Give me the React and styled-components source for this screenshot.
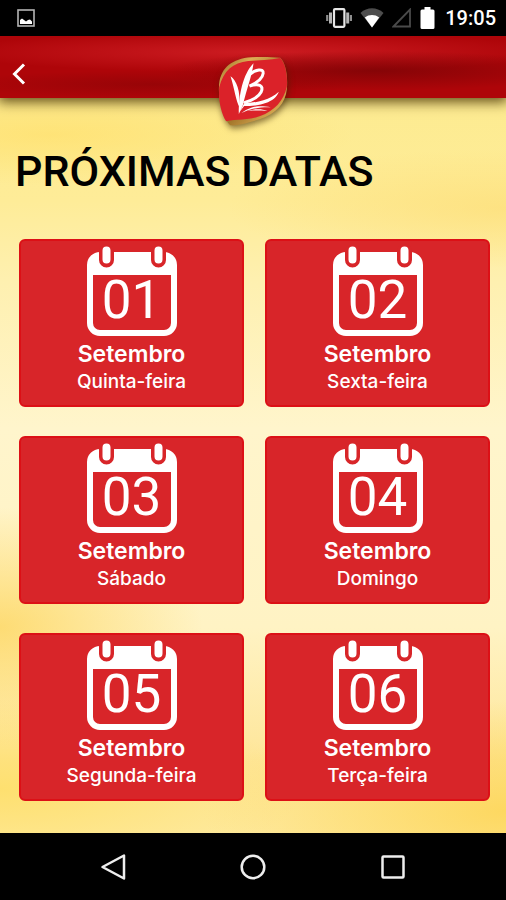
import React from 'react';
import styled, { createGlobalStyle } from 'styled-components';

const dates = [
  { day: '01', month: 'Setembro', weekday: 'Quinta-feira' },
  { day: '02', month: 'Setembro', weekday: 'Sexta-feira' },
  { day: '03', month: 'Setembro', weekday: 'Sábado' },
  { day: '04', month: 'Setembro', weekday: 'Domingo' },
  { day: '05', month: 'Setembro', weekday: 'Segunda-feira' },
  { day: '06', month: 'Setembro', weekday: 'Terça-feira' },
];

const StatusBar = () => (
  <Status>
    <svg width="18" height="18" viewBox="0 0 18 18">
      <rect x="1" y="1" width="16" height="16" fill="none" stroke="#b4b4b4" strokeWidth="1.6" />
      <path d="M3 15v-4l2-1.5 2 1.5 2 1.5 2-1.5 2-.5 2 2v2.5z" fill="#fff" />
    </svg>
    <StatusIcons>
      <svg width="26" height="20" viewBox="0 0 26 20">
        <rect x="8" y="1.2" width="10.4" height="17.6" rx="1" fill="none" stroke="#e6e6e6" strokeWidth="2.2" />
        <path d="M4.5 4.5v11M21.7 4.5v11" stroke="#b5b5b5" strokeWidth="3" />
        <path d="M1.2 7v6M24.9 7v6" stroke="#8d8d8d" strokeWidth="2.2" />
      </svg>
      <svg width="24" height="20" viewBox="0 0 24 20">
        <path d="M0.5 5C7-1.2 17-1.2 23.5 5L12 19.5z" fill="#4d4d4d" />
        <path d="M4.8 9.5C9 6.2 15 6.2 19.2 9.5L12 19.5z" fill="#fff" />
      </svg>
      <svg width="20" height="20" viewBox="0 0 20 20">
        <path d="M1.5 18.5L18 1.5V18.5z" fill="none" stroke="#4a4a4a" strokeWidth="1.8" />
      </svg>
      <svg width="15" height="22" viewBox="0 0 15 22">
        <path d="M4.5 0h6v2.5H13a1.5 1.5 0 0 1 1.5 1.5v16.5a1.5 1.5 0 0 1-1.5 1.5H2a1.5 1.5 0 0 1-1.5-1.5V4A1.5 1.5 0 0 1 2 2.5h2.5z" fill="#fff" />
      </svg>
      <Clock>19:05</Clock>
    </StatusIcons>
  </Status>
);

const Logo = () => (
  <LogoMark viewBox="46 45 225 225" role="img" aria-label="VB">
    <defs>
      <linearGradient id="gold" x1="0" y1="0" x2="1" y2="1">
        <stop offset="0" stopColor="#8d6420" />
        <stop offset="0.25" stopColor="#dfae55" />
        <stop offset="0.55" stopColor="#a3762a" />
        <stop offset="0.8" stopColor="#d3a44e" />
        <stop offset="1" stopColor="#7b551a" />
      </linearGradient>
    </defs>
    <path d="M57 132C62 82 98 56 152 52C184 50 214 51 240 53C256 66 264 106 260 148C256 190 228 222 178 238C144 248 118 258 90 256C70 236 52 178 57 132Z" fill="url(#gold)" />
    <path d="M57 142C70 92 98 68 144 63C176 60 210 61 240 54C255 67 263 106 260 140C250 184 222 212 180 228C142 242 108 236 78 244C62 220 54 176 57 142Z" fill="#db2229" />
    <g fill="#fff">
      <path d="M91 109C109 122 121 150 118 202C108 186 102 142 91 109Z" />
      <path d="M160 70C156 106 140 146 128 196L116 222C115 168 128 102 160 70Z" />
      <path d="M132 190C172 188 211 178 236 155C224 188 178 198 132 198L118 216Z" />
      <path d="M124 219C154 197 177 196 212 202C176 201 153 206 124 219Z" />
      <path d="M142 213C164 206 184 206 202 213C182 212 166 211 142 213Z" />
    </g>
    <path d="M148 104C166 88 191 84 189 100C187 119 164 131 148 138C178 128 191 138 183 156C173 174 150 183 134 187" fill="none" stroke="#fff" strokeWidth="9" strokeLinecap="round" />
  </LogoMark>
);

const CalendarIcon = () => (
  <svg width="92" height="91" viewBox="0 0 92 91">
    <path
      fillRule="evenodd"
      fill="#fff"
      d="M14 6H78A13 13 0 0 1 91 19V77A13 13 0 0 1 78 90H14A13 13 0 0 1 1 77V19A13 13 0 0 1 14 6ZM7 29V77A7 7 0 0 0 14 84H78A7 7 0 0 0 85 77V29Z"
    />
    <path d="M20.5 5V14M72.5 5V14" stroke="#d82529" strokeWidth="15" strokeLinecap="round" />
    <path d="M20.5 4.5V13.5M72.5 4.5V13.5" stroke="#fff" strokeWidth="8" strokeLinecap="round" />
  </svg>
);

const DateCard = ({ date }) => (
  <Card type="button">
    <Calendar>
      <CalendarIcon />
      <Day>{date.day}</Day>
    </Calendar>
    <Month>{date.month}</Month>
    <Weekday>{date.weekday}</Weekday>
  </Card>
);

const App = () => {
  return (
    <>
      <GlobalStyle />
      <Screen>
        <StatusBar />
        <Header>
          <BackButton type="button" aria-label="Voltar">
            <svg width="14" height="22" viewBox="0 0 14 22">
              <path d="M12 1.5L2.5 11L12 20.5" fill="none" stroke="#fff" strokeWidth="3" />
            </svg>
          </BackButton>
          <Logo />
        </Header>
        <Main>
          <Title>PRÓXIMAS DATAS</Title>
          <Grid>
            {dates.map((date) => (
              <DateCard key={date.day} date={date} />
            ))}
          </Grid>
        </Main>
        <NavBar>
          <NavButton type="button" aria-label="Back">
            <svg width="28" height="28" viewBox="0 0 28 28">
              <path d="M25 2.5V25.5L3.5 14Z" />
            </svg>
          </NavButton>
          <NavButton type="button" aria-label="Home">
            <svg width="28" height="28" viewBox="0 0 28 28">
              <circle cx="14" cy="14" r="11.3" />
            </svg>
          </NavButton>
          <NavButton type="button" aria-label="Recent">
            <svg width="28" height="28" viewBox="0 0 28 28">
              <rect x="3.5" y="3.5" width="21" height="21" rx="1" />
            </svg>
          </NavButton>
        </NavBar>
      </Screen>
    </>
  );
};

export default App;

const GlobalStyle = createGlobalStyle`
  * {
    box-sizing: border-box;
  }

  body {
    margin: 0;
    background: #000;
    font-family: Roboto, 'Liberation Sans', sans-serif;
  }

  button {
    font-family: inherit;
    cursor: pointer;
  }

  svg {
    display: block;
  }
`;

const Screen = styled.div`
  display: flex;
  flex-direction: column;
  min-height: 100vh;
`;

const Status = styled.div`
  display: flex;
  align-items: center;
  justify-content: space-between;
  height: 36px;
  padding: 0 10px 0 17px;
  background: #000;
`;

const StatusIcons = styled.div`
  display: flex;
  align-items: center;
  gap: 8px;
`;

const Clock = styled.span`
  margin-left: 2px;
  color: #fff;
  font-size: 20px;
  font-weight: 500;
  line-height: 36px;
`;

const Header = styled.header`
  position: relative;
  z-index: 1;
  display: flex;
  align-items: center;
  height: 62px;
  padding: 14px 0 0 4px;
  background:
    radial-gradient(ellipse 42% 20px at 74% 56%, rgba(120, 4, 6, 0.75), transparent),
    radial-gradient(ellipse 40% 14px at 30% 78%, rgba(140, 4, 6, 0.65), transparent),
    radial-gradient(ellipse 60% 20px at 50% 26%, rgba(208, 30, 36, 0.9), transparent),
    #ae0509;
  box-shadow: 0 2px 12px 2px rgba(80, 60, 10, 0.9);
  clip-path: inset(0 0 -48px 0);
`;

const BackButton = styled.button`
  display: flex;
  padding: 8px;
  background: none;
  border: none;
`;

const LogoMark = styled.svg`
  position: absolute;
  top: 19px;
  left: 50%;
  width: 75px;
  height: 75px;
  transform: translateX(-50%);
  overflow: visible;
  filter: drop-shadow(1px 3px 3px rgba(60, 35, 0, 0.6));
`;

const Main = styled.main`
  flex: 1;
  padding: 49px 16px 32px 19px;
  background:
    radial-gradient(ellipse 60% 50px at 10% 5%, rgba(255, 224, 108, 0.7), transparent),
    radial-gradient(ellipse 55% 60px at 100% 15%, rgba(253, 222, 120, 0.7), transparent),
    radial-gradient(ellipse 40% 120px at 0 72%, rgba(253, 214, 96, 0.8), transparent),
    radial-gradient(ellipse 60% 110px at 100% 97%, rgba(253, 214, 90, 0.9), transparent),
    radial-gradient(ellipse 60% 90px at 0 94%, rgba(254, 222, 100, 0.8), transparent),
    linear-gradient(#fdeb90 0%, #feec98 14%, #fef0b0 25%, #fff5cc 45%, #fff3c4 72%, #fee69a 90%, #feeaa0 100%);
`;

const Title = styled.h1`
  margin: 0 0 44px -4px;
  color: #000;
  font-size: 43px;
  font-weight: 500;
  line-height: 48px;
`;

const Grid = styled.div`
  display: grid;
  grid-template-columns: 1fr 1fr;
  gap: 29px 21px;
`;

const Card = styled.button`
  display: flex;
  flex-direction: column;
  align-items: center;
  padding: 5px 6px 9px;
  color: #fff;
  background: #d82529;
  border: 2px solid #dc1016;
  border-radius: 6px;
`;

const Calendar = styled.span`
  display: grid;
  place-items: center;
  margin-bottom: 3px;

  > * {
    grid-area: 1 / 1;
  }
`;

const Day = styled.span`
  padding-top: 16px;
  font-size: 53px;
  line-height: 56px;
`;

const Month = styled.span`
  font-family: Inter, Roboto, sans-serif;
  font-size: 23px;
  font-weight: 600;
  line-height: 28px;
`;

const Weekday = styled.span`
  font-family: Inter, Roboto, sans-serif;
  font-size: 19px;
  font-weight: 500;
  line-height: 28px;
`;

const NavBar = styled.nav`
  display: flex;
  justify-content: center;
  align-items: center;
  gap: 96px;
  height: 67px;
  background: #000;
`;

const NavButton = styled.button`
  padding: 8px;
  background: none;
  border: none;

  svg {
    fill: none;
    stroke: #eee;
    stroke-width: 2.5;
    stroke-linejoin: round;
  }
`;
